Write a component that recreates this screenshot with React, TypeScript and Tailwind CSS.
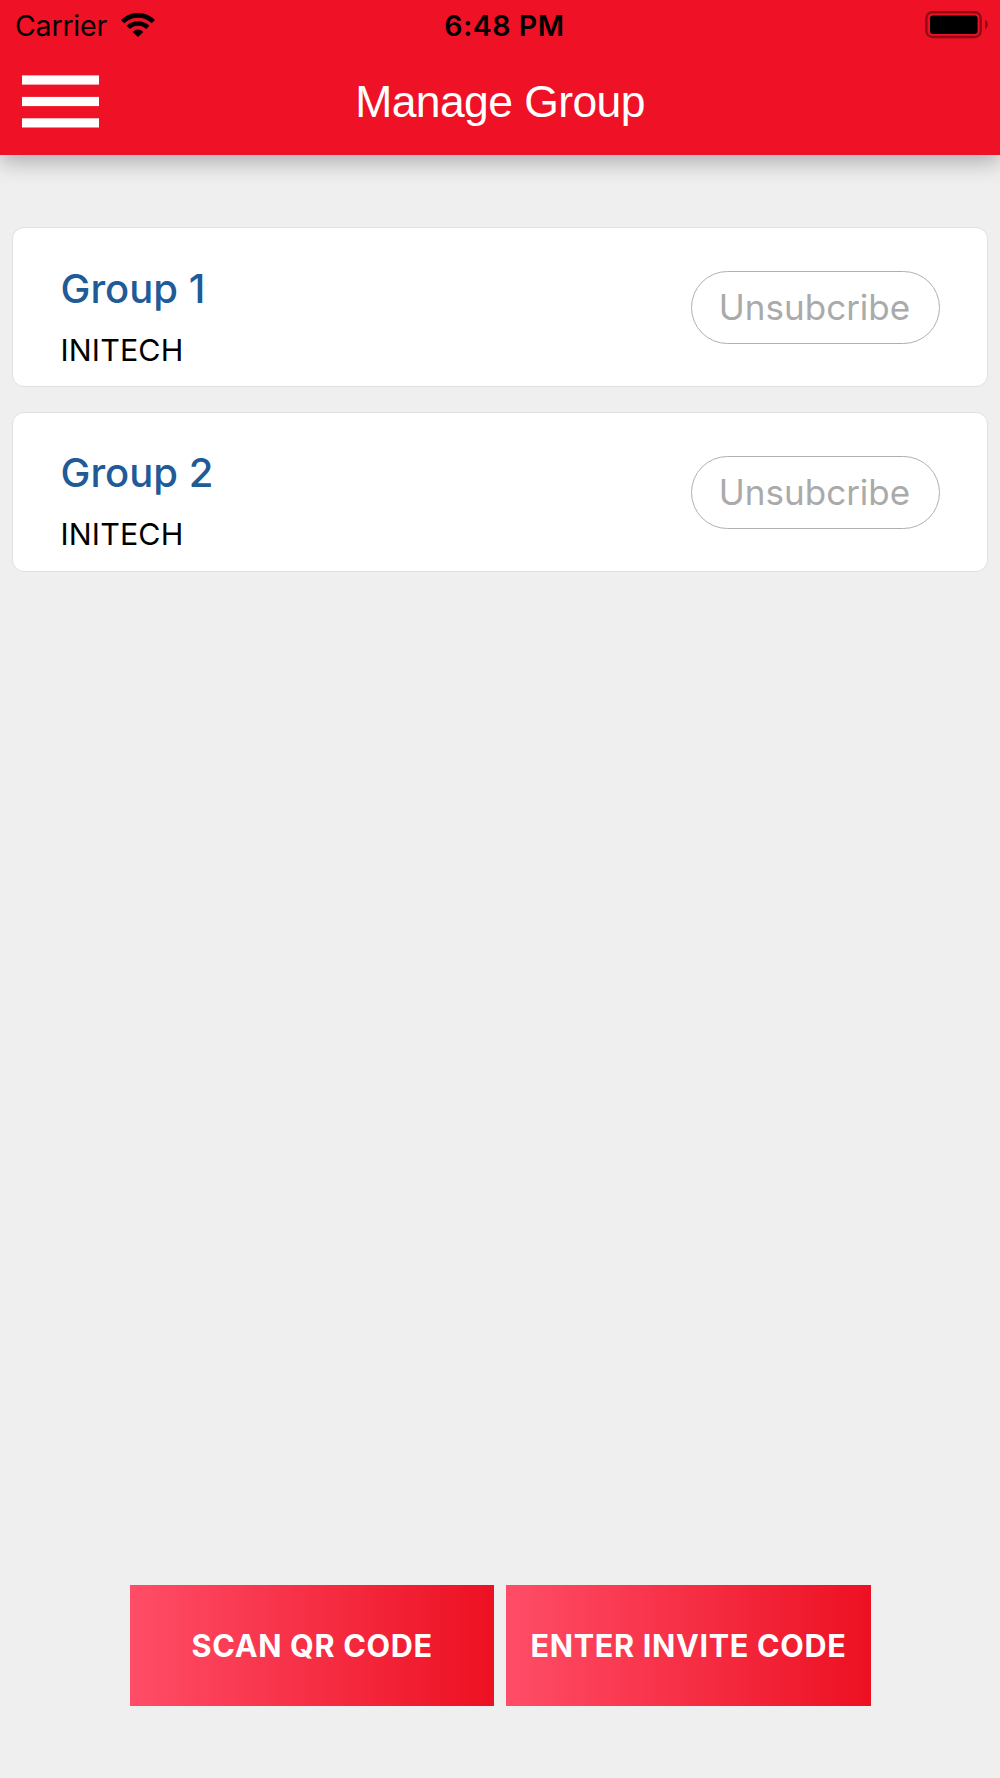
import React from "react";

const groups = [
  { name: "Group 1", org: "INITECH" },
  { name: "Group 2", org: "INITECH" },
];

const actions = ["SCAN QR CODE", "ENTER INVITE CODE"];

function WifiIcon() {
  return (
    <svg className="ml-[14px] h-[25px] w-[34px]" viewBox="0 0 34 25">
      <path d="M1.6 8.7 A21.8 21.8 0 0 1 32.4 8.7" fill="none" stroke="#000" strokeWidth="4.7" />
      <path d="M7.2 14.4 A14 14 0 0 1 26.8 14.4" fill="none" stroke="#000" strokeWidth="4.5" />
      <path d="M11.7 18.9 Q17 14.3 22.3 18.9 L17 24 Z" fill="#000" />
    </svg>
  );
}

function BatteryIcon() {
  return (
    <svg className="h-[28px] w-[64px]" viewBox="0 0 64 28">
      <rect x="1.4" y="1.2" width="54.3" height="24.8" rx="6" fill="none" stroke="#930b15" strokeWidth="2.4" />
      <rect x="5" y="4.5" width="47.6" height="18.4" rx="3" fill="#000" />
      <path d="M60 8.5 Q63 10.5 63 13.6 Q63 16.7 60 18.7 Z" fill="#930b15" />
    </svg>
  );
}

function MenuIcon() {
  return (
    <svg className="ml-[22px] h-[53px] w-[77px]" viewBox="0 0 77 53" fill="#fff">
      <rect y="0.4" width="77" height="9.2" />
      <rect y="21.9" width="77" height="9.2" />
      <rect y="43.3" width="77" height="9.2" />
    </svg>
  );
}

export default function App() {
  return (
    <div className="flex h-[1778px] w-[1000px] flex-col overflow-hidden bg-[#efefef] font-['Inter',sans-serif]">
      <header className="flex h-[154.67px] shrink-0 flex-col bg-[#ef1125] shadow-[0_8px_20px_rgba(0,0,0,0.26)]">
        <div className="grid h-[50px] grid-cols-3 items-center">
          <div className="flex items-center pl-[15px]">
            <span className="pt-[2px] text-[28.5px] leading-none tracking-[-0.2px]">Carrier</span>
            <WifiIcon />
          </div>
          <span className="pt-[2px] pl-[9px] text-center text-[28.5px] leading-none font-semibold tracking-[0.55px]">6:48 PM</span>
          <div className="flex justify-end pr-[11px]">
            <BatteryIcon />
          </div>
        </div>
        <div className="grid h-[103px] grid-cols-[1fr_auto_1fr] items-center">
          <MenuIcon />
          <h1 className="pt-px font-['Liberation_Sans',sans-serif] text-[44.5px] leading-none tracking-[-0.6px] text-white">
            Manage Group
          </h1>
        </div>
      </header>
      <main className="flex flex-1 flex-col gap-[24.4px] px-[12px] pt-[72.5px]">
        {groups.map((group) => (
          <section
            key={group.name}
            className="flex h-[160px] justify-between rounded-[12px] border border-[#e0e0e0] bg-white pr-[47px] pl-[47.5px]"
          >
            <div className="pt-[38.5px]">
              <h2 className="text-[40px] leading-[44px] font-medium text-[#205b98]">{group.name}</h2>
              <p className="mt-[24px] text-[30.4px] leading-none tracking-[0.15px] text-black">{group.org}</p>
            </div>
            <button className="mt-[43px] h-[73px] w-[249px] rounded-full border border-[#b0b0b0] pr-[2px] text-[35px] text-[#aaaaaa]">
              Unsubcribe
            </button>
          </section>
        ))}
      </main>
      <footer className="flex gap-[12px] pb-[72.5px] pl-[130px]">
        {actions.map((label) => (
          <button
            key={label}
            className="h-[121px] w-[364.3px] bg-linear-to-r/srgb from-[#ff4d67] to-[#ed1022] pt-[2px] text-[30.6px] font-bold tracking-[0.66px] whitespace-nowrap text-white"
          >
            {label}
          </button>
        ))}
      </footer>
    </div>
  );
}
